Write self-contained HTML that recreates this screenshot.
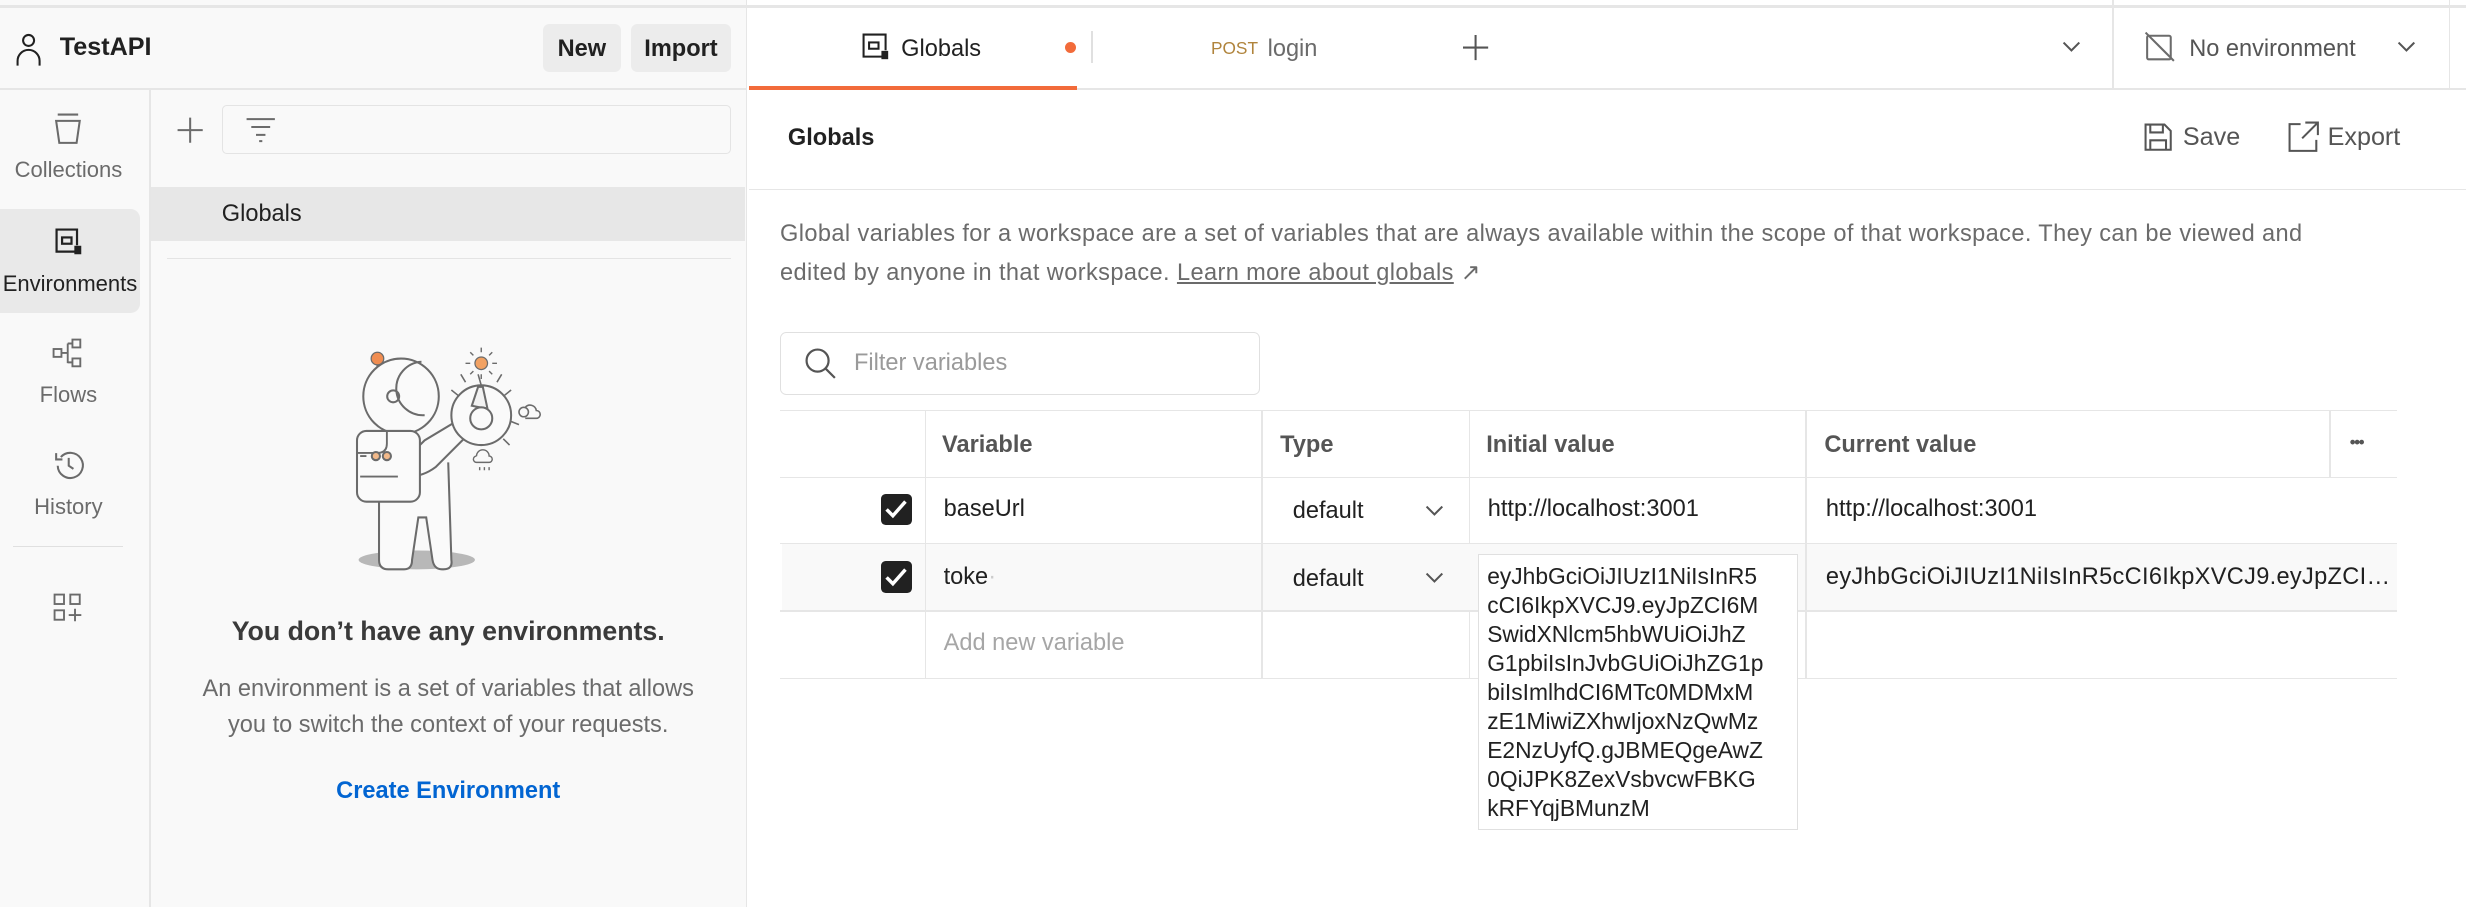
<!DOCTYPE html>
<html><head><meta charset="utf-8"><style>
*{box-sizing:border-box;margin:0;padding:0}
html,body{width:2466px;height:908px;overflow:hidden;background:#fff}
#r{zoom:1.5727;width:1568px;height:577px;position:relative;font-family:"Liberation Sans",sans-serif;color:#212121;font-size:15px}
.a{position:absolute}
.t{white-space:nowrap}
svg{position:absolute;overflow:visible}
.cb{position:absolute;width:20px;height:20px;background:#212121;border-radius:3px}
</style></head><body><div id="r">
<!-- left panel -->
<div class="a" style="left:0;top:0;width:475px;height:577px;background:#f9f9f9;border-right:1px solid #e6e6e6"></div>
<div class="a" style="left:0;top:3px;width:1568px;height:2px;background:#e6e6e6"></div>
<div class="a" style="left:0;top:56px;width:475px;height:1px;background:#e6e6e6"></div>
<svg style="left:10px;top:20px" width="20" height="24" fill="none" stroke="#212121" stroke-width="1.3"><circle cx="8" cy="6" r="3.5"/><path d="M1 22v-3a7 7 0 0 1 14 0v3"/></svg>
<div class="a t" style="left:38px;top:21px;font-size:16px;font-weight:bold">TestAPI</div>
<div class="a t" style="left:345px;top:15px;width:50px;height:31px;background:#ececec;border-radius:4px;text-align:center;line-height:31px;font-weight:bold">New</div>
<div class="a t" style="left:401px;top:15px;width:64px;height:31px;background:#ececec;border-radius:4px;text-align:center;line-height:31px;font-weight:bold">Import</div>
<div class="a" style="left:95px;top:57px;width:1px;height:520px;background:#e6e6e6"></div>
<!-- rail -->
<svg style="left:34px;top:72px" width="20" height="20" fill="none" stroke="#6b6b6b" stroke-width="1.3"><path d="M3 1h13M2 5h15l-2 14H4z"/></svg>
<div class="a t" style="left:0;top:100px;width:87px;text-align:center;font-size:14px;color:#6b6b6b">Collections</div>
<div class="a" style="left:0;top:133px;width:89px;height:66px;background:#e9e9e9;border-radius:0 6px 6px 0"></div>
<svg style="left:35px;top:145px" width="20" height="20" fill="none" stroke="#212121" stroke-width="1.4"><path d="M14 15H1V1h13v10"/><rect x="4.5" y="6" width="6" height="4"/><rect x="13" y="12" width="3" height="4" fill="#212121"/></svg>
<div class="a t" style="left:0;top:172px;width:89px;text-align:center;font-size:14px">Environments</div>
<svg style="left:33px;top:215px" width="22" height="20" fill="none" stroke="#6b6b6b" stroke-width="1.2"><rect x="1" y="7" width="5" height="5"/><rect x="13" y="1" width="5" height="5"/><rect x="13" y="13" width="5" height="5"/><path d="M6 9.5h4M10 3.5v12.5M10 3.5h3M10 15.5h3"/></svg>
<div class="a t" style="left:0;top:243px;width:87px;text-align:center;font-size:14px;color:#6b6b6b">Flows</div>
<svg style="left:34px;top:286px" width="20" height="20" fill="none" stroke="#6b6b6b" stroke-width="1.3"><path d="M3 10a8 8 0 1 0 2-5.5M2 2v4h4M10 5v5l3 2"/></svg>
<div class="a t" style="left:0;top:314px;width:87px;text-align:center;font-size:14px;color:#6b6b6b">History</div>
<div class="a" style="left:8px;top:347px;width:70px;height:1px;background:#e0e0e0"></div>
<svg style="left:34px;top:377px" width="20" height="20" fill="none" stroke="#6b6b6b" stroke-width="1.2"><rect x="1" y="1" width="6" height="6"/><rect x="11" y="1" width="6" height="6"/><rect x="1" y="11" width="6" height="6"/><path d="M14 10v8M10 14h8"/></svg>
<!-- list panel -->
<svg style="left:112px;top:74px" width="18" height="18" stroke="#6b6b6b" stroke-width="1.3"><path d="M9 1v16M1 9h16"/></svg>
<div class="a" style="left:141px;top:67px;width:324px;height:31px;border:1px solid #e4e4e4;border-radius:3px;background:#f9f9f9"></div>
<svg style="left:156px;top:74px" width="20" height="18" stroke="#6b6b6b" stroke-width="1.3"><path d="M1 2h18M4 7h12M7 12h6M9 16h2"/></svg>
<div class="a" style="left:96px;top:119px;width:378px;height:34px;background:#e7e7e7"></div>
<div class="a t" style="left:141px;top:127px;font-size:15px">Globals</div>
<div class="a" style="left:106px;top:164px;width:359px;height:1px;background:#e4e4e4"></div>
<!-- illustration -->
<svg style="left:0;top:0" width="475" height="577" fill="none" stroke="#6b6b6b" stroke-width="1.3">
<ellipse cx="265" cy="356" rx="37" ry="6" fill="#b8b8b8" stroke="none"/>
<path d="M241 318v38q0 6 6 6h10q5 0 5-6l4-27h5l4 27q1 6 6 6h1q6 0 5-6l-2-62" fill="#fafafa"/>
<path d="M260 290l10-10 20-12q8-2 12 4l-25 25q-8 6-17 6" fill="#fafafa"/>
<circle cx="240" cy="228" r="4" fill="#f08d51" stroke="#6b6b6b" stroke-width="0.8"/>
<path d="M240 232v10"/>
<circle cx="255" cy="252" r="24" fill="#fafafa"/>
<circle cx="266" cy="249" r="3.8" transform="translate(-16 3)"/>
<path d="M268 230a16 16 0 0 0 2 34"/>
<circle cx="306" cy="264" r="19" fill="#fafafa"/>
<path d="M306 245l-2-7M292 252l-5-4M320 252l5-4M325 268l5 2M320 279l4 4M296 243l-3-5M316 243l3-5" stroke-width="1"/>
<path d="M300 258l4-12h3l3 14z" fill="#f2f2f2"/>
<circle cx="306" cy="266" r="7" fill="#fafafa"/>
<circle cx="306" cy="231" r="4" fill="#f2a263" stroke="#6b6b6b" stroke-width="0.8"/>
<path d="M306 224v-3M306 238v3M299 231h-3M313 231h3M301 226l-2-2M311 226l2-2M301 236l-2 2M311 236l2 2" stroke-width="0.9"/>
<rect x="227" y="274" width="40" height="45" rx="6" fill="#fafafa"/>
<path d="M246 274v8q0 6-6 6h-13M229 303h24M229 290h4" stroke-width="1.2"/>
<circle cx="239" cy="290" r="2.6" fill="#f2b98a"/><circle cx="246" cy="290" r="2.6" fill="#f2b98a"/>
<path d="M260 290l5-5" stroke="none"/>
<circle cx="333" cy="262" r="3" stroke-width="1"/><path d="M334 259a4 4 0 0 1 7 2a2.5 2.5 0 0 1 0 5h-7" stroke-width="1"/>
<path d="M303 290a4 4 0 0 1 8 0a2 2 0 0 1 0 4h-8a2 2 0 0 1 0-4M305 297v2M308 297v2M311 297v2" stroke-width="0.9"/>
</svg>
<div class="a t" style="left:96px;top:392px;width:378px;text-align:center;font-size:17px;font-weight:bold;color:#3a3a3a">You don’t have any environments.</div>
<div class="a" style="left:96px;top:426px;width:378px;text-align:center;font-size:15px;color:#6b6b6b;line-height:23px">An environment is a set of variables that allows<br>you to switch the context of your requests.</div>
<div class="a t" style="left:96px;top:494px;width:378px;text-align:center;font-size:15px;font-weight:bold;color:#0265d2">Create Environment</div>
<!-- tabs -->
<div class="a" style="left:476px;top:56px;width:1092px;height:1px;background:#e6e6e6"></div>
<div class="a" style="left:476px;top:55px;width:209px;height:2px;background:#f26b3a"></div>
<svg style="left:548px;top:21px" width="20" height="20" fill="none" stroke="#212121" stroke-width="1.3"><path d="M13 15H1V1h14v10"/><rect x="4.5" y="6" width="6" height="4"/><rect x="13" y="12" width="3" height="4" fill="#212121"/></svg>
<div class="a t" style="left:573px;top:22px;font-size:15px">Globals</div>
<div class="a" style="left:677px;top:27px;width:7px;height:7px;border-radius:50%;background:#f26b3a"></div>
<div class="a" style="left:694px;top:20px;width:1px;height:20px;background:#e0e0e0"></div>
<div class="a t" style="left:770px;top:24px;font-size:11px;color:#b0843c">POST</div>
<div class="a t" style="left:806px;top:22px;font-size:15px;color:#6b6b6b">login</div>
<svg style="left:930px;top:22px" width="16" height="16" stroke="#555" stroke-width="1.3"><path d="M8 0v16M0 8h16"/></svg>
<svg style="left:1311px;top:26px" width="12" height="8" fill="none" stroke="#555" stroke-width="1.3"><path d="M1 1l5 5 5-5"/></svg>
<div class="a" style="left:1343px;top:0;width:1px;height:56px;background:#e6e6e6"></div>
<svg style="left:1363px;top:20px" width="20" height="20" fill="none" stroke="#6b6b6b" stroke-width="1.3"><rect x="2" y="3" width="15" height="15" rx="1"/><path d="M1 1l18 18"/></svg>
<div class="a t" style="left:1392px;top:22px;font-size:15px;color:#555">No environment</div>
<svg style="left:1524px;top:26px" width="12" height="8" fill="none" stroke="#555" stroke-width="1.3"><path d="M1 1l5 5 5-5"/></svg>
<div class="a" style="left:1557px;top:0;width:1px;height:56px;background:#e6e6e6"></div>
<!-- globals header -->
<div class="a t" style="left:501px;top:79px;font-size:15px;font-weight:bold">Globals</div>
<svg style="left:1363px;top:78px" width="18" height="18" fill="none" stroke="#555" stroke-width="1.3"><path d="M1 1h12l4 4v12H1zM4 1v5h8V1M4 17v-6h10v6"/></svg>
<div class="a t" style="left:1388px;top:78px;font-size:16px;color:#555">Save</div>
<svg style="left:1455px;top:77px" width="20" height="20" fill="none" stroke="#555" stroke-width="1.3"><path d="M8 2H1v17h17v-7M11 1h8v8M19 1L9 11"/></svg>
<div class="a t" style="left:1480px;top:78px;font-size:16px;color:#555">Export</div>
<div class="a" style="left:476px;top:120px;width:1092px;height:1px;background:#e6e6e6"></div>
<div class="a t" style="left:496px;top:136px;font-size:15px;color:#6b6b6b;line-height:25px;letter-spacing:0.25px">Global variables for a workspace are a set of variables that are always available within the scope of that workspace. They can be viewed and<br>edited by anyone in that workspace. <span style="text-decoration:underline">Learn more about globals</span> ↗</div>
<div class="a" style="left:496px;top:211px;width:305px;height:40px;border:1px solid #e0e0e0;border-radius:4px"></div>
<svg style="left:512px;top:221px" width="20" height="20" fill="none" stroke="#555" stroke-width="1.4"><circle cx="8" cy="8" r="7"/><path d="M13 13l6 6"/></svg>
<div class="a t" style="left:543px;top:222px;font-size:15px;color:#9a9a9a">Filter variables</div>
<!-- table -->
<div class="a" style="left:496px;top:261px;width:1028px;height:171px;border-top:1px solid #e6e6e6;border-bottom:1px solid #e6e6e6"></div>
<div class="a" style="left:496px;top:303px;width:1028px;height:1px;background:#e6e6e6"></div>
<div class="a" style="left:496px;top:345px;width:1028px;height:1px;background:#e6e6e6"></div>
<div class="a" style="left:496px;top:388px;width:1028px;height:1px;background:#e6e6e6"></div>
<div class="a" style="left:588px;top:261px;width:1px;height:171px;background:#e6e6e6"></div>
<div class="a" style="left:802px;top:261px;width:1px;height:171px;background:#e6e6e6"></div>
<div class="a" style="left:934px;top:261px;width:1px;height:171px;background:#e6e6e6"></div>
<div class="a" style="left:1148px;top:261px;width:1px;height:171px;background:#e6e6e6"></div>
<div class="a" style="left:1481px;top:261px;width:1px;height:42px;background:#e6e6e6"></div>
<div class="a t" style="left:599px;top:274px;font-weight:bold;color:#555">Variable</div>
<div class="a t" style="left:814px;top:274px;font-weight:bold;color:#555">Type</div>
<div class="a t" style="left:945px;top:274px;font-weight:bold;color:#555">Initial value</div>
<div class="a t" style="left:1160px;top:274px;font-weight:bold;color:#555">Current value</div>
<div class="a t" style="left:1494px;top:275px;font-size:11px;color:#555;letter-spacing:-1px">•••</div>
<div class="cb" style="left:560px;top:314px"></div>
<svg style="left:563px;top:318px" width="14" height="12" fill="none" stroke="#fff" stroke-width="2.2"><path d="M1 6l4 4 8-9"/></svg>
<div class="a t" style="left:600px;top:315px">baseUrl</div>
<div class="a t" style="left:822px;top:316px">default</div>
<svg style="left:906px;top:321px" width="12" height="8" fill="none" stroke="#555" stroke-width="1.3"><path d="M1 1l5 5 5-5"/></svg>
<div class="a t" style="left:946px;top:315px">http://localhost:3001</div>
<div class="a t" style="left:1161px;top:315px">http://localhost:3001</div>
<div class="a" style="left:497px;top:346px;width:1027px;height:42px;background:#f9f9f9"></div>
<div class="a" style="left:588px;top:346px;width:1px;height:42px;background:#e6e6e6"></div>
<div class="a" style="left:802px;top:346px;width:1px;height:42px;background:#e6e6e6"></div>
<div class="a" style="left:1148px;top:346px;width:1px;height:42px;background:#e6e6e6"></div>
<div class="cb" style="left:560px;top:357px"></div>
<svg style="left:563px;top:361px" width="14" height="12" fill="none" stroke="#fff" stroke-width="2.2"><path d="M1 6l4 4 8-9"/></svg>
<div class="a t" style="left:600px;top:358px">toke<span style="color:#ccc">·</span></div>
<div class="a t" style="left:822px;top:359px">default</div>
<svg style="left:906px;top:364px" width="12" height="8" fill="none" stroke="#555" stroke-width="1.3"><path d="M1 1l5 5 5-5"/></svg>
<div class="a t" style="left:1161px;top:358px;width:360px;overflow:hidden;text-overflow:ellipsis;letter-spacing:0.2px">eyJhbGciOiJIUzI1NiIsInR5cCI6IkpXVCJ9.eyJpZCI6MSwidXNlcm5hbWUiOiJhZG1pbiIsInJvbGUiOiJhZG1pbiJ9</div>
<div class="a t" style="left:600px;top:400px;color:#a6a6a6">Add new variable</div>
<div class="a" style="left:940px;top:352px;width:203px;height:176px;background:#fff;border:1px solid #e0e0e0;padding:5px 5px;font-size:14.5px;line-height:18.4px;white-space:pre;overflow:hidden">eyJhbGciOiJIUzI1NiIsInR5
cCI6IkpXVCJ9.eyJpZCI6M
SwidXNlcm5hbWUiOiJhZ
G1pbiIsInJvbGUiOiJhZG1p
biIsImlhdCI6MTc0MDMxM
zE1MiwiZXhwIjoxNzQwMz
E2NzUyfQ.gJBMEQgeAwZ
0QiJPK8ZexVsbvcwFBKG
kRFYqjBMunzM</div>
</div></body></html>
